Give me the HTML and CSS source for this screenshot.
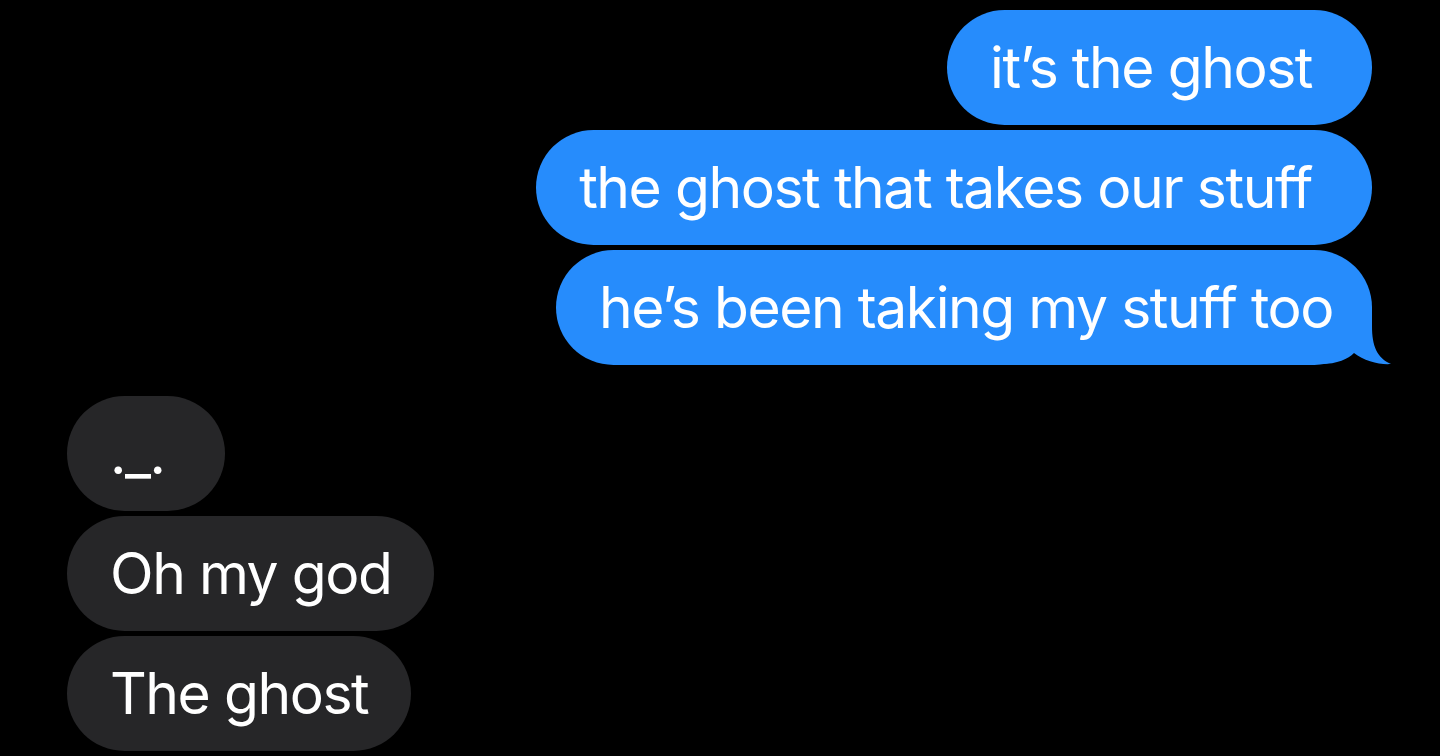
FILE: index.html
```html
<!DOCTYPE html>
<html lang="en">
<head>
  <meta charset="UTF-8">
  <meta name="viewport" content="width=device-width, initial-scale=1.0">
  <title>Messages</title>
  <link rel="stylesheet" href="styles.css">
</head>
<body>
  <div class="thread">
    <!-- Sent messages -->
    <div class="group sent">
      <div class="bubble blue space-end"><span class="text">it’s the ghost</span></div>
      <div class="bubble blue space-end"><span class="text">the ghost that takes our stuff</span></div>
      <div class="bubble blue last">
        <span class="text">he’s been taking my stuff too</span>
        <svg class="tail" width="71" height="57" viewBox="0 0 71 57">
          <path d="M0 56 L0 0 H52 V18 C52 38 57 50 71 56 C60 57 44 53 34 45 C28 51 18 56 0 56 Z" fill="#268cfc"/>
        </svg>
      </div>
    </div>

    <!-- Received messages -->
    <div class="group received">
      <div class="bubble gray space-end"><span class="text">._.</span></div>
      <div class="bubble gray"><span class="text">Oh my god</span></div>
      <div class="bubble gray"><span class="text">The ghost</span></div>
    </div>
  </div>
</body>
</html>
```

FILE: styles.css
```css
/* General Styles */
body {
  margin: 0;
  background-color: #000;
  font-family: Inter, "Liberation Sans", Arial, sans-serif;
  color: #fff;
}

.thread {
  padding: 10px 68px 0 67px;
  display: flex;
  flex-direction: column;
  gap: 31px;
}

.group {
  display: flex;
  flex-direction: column;
  gap: 5px;
}

.sent {
  align-items: flex-end;
}

.received {
  align-items: flex-start;
}

.bubble {
  position: relative;
  height: 115px;
  display: flex;
  align-items: center;
  padding: 0 43px 0 43px;
  border-radius: 58px;
  font-size: 57px;
  letter-spacing: -1.45px;
  white-space: nowrap;
  box-sizing: border-box;
}

.text {
  position: relative;
  z-index: 1;
}

/* trailing space typed after the text */
.space-end {
  padding-right: 60px;
}

.blue {
  background-color: #268cfc;
}

.gray {
  background-color: #262628;
}

.bubble.last {
  padding-right: 39px;
}

.tail {
  position: absolute;
  right: -19px;
  bottom: 0;
  z-index: 0;
}
```
